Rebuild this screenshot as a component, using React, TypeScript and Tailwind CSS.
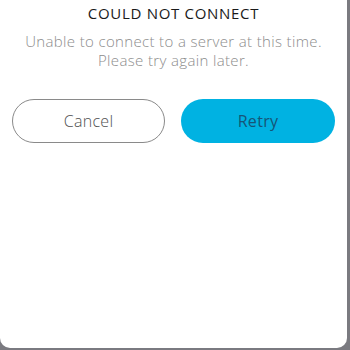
import React from "react";

export default function App() {
  return (
    <div className="w-[350px] h-[350px] bg-[#7a7a80] overflow-hidden">
      <div
        className="w-[347px] h-[348px] bg-white rounded-b-[10px] flex flex-col items-center"
        style={{ fontFamily: '"Open Sans", "DejaVu Sans", sans-serif' }}
      >
        <div className="pt-[3px] text-[15px] leading-[20px] font-medium text-[#1a1a1a] tracking-[0.7px]">
          COULD NOT CONNECT
        </div>
        <div className="mt-[9px] flex flex-col items-center text-[15px] leading-[19px] font-light text-[#8c8c8c] tracking-[0.35px]">
          <div>Unable to connect to a server at this time.</div>
          <div>Please try again later.</div>
        </div>
        <div className="mt-[29px] w-full px-[12px] flex gap-[16px]">
          <button className="w-[153px] h-[44px] rounded-full border border-[#8a8a8a] bg-white text-[16px] text-[#505050] font-light tracking-[0.3px]">
            Cancel
          </button>
          <button className="w-[154px] h-[44px] rounded-full bg-[#00b2e2] text-[16px] text-[#165578] font-normal tracking-[0.3px]">
            Retry
          </button>
        </div>
      </div>
    </div>
  );
}
